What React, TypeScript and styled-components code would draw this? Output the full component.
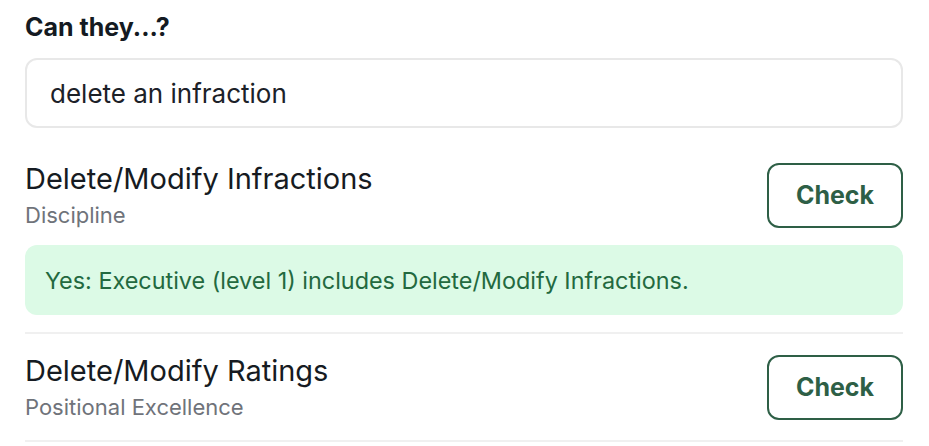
import React from "react";
import styled, { createGlobalStyle } from "styled-components";

const GlobalStyle = createGlobalStyle`
  html, body { margin: 0; padding: 0; background: #ffffff; }
  body { font-family: Inter, "Noto Sans", sans-serif; -webkit-font-smoothing: antialiased; }
  * { box-sizing: border-box; }
`;

const Page = styled.div`
  padding: 10px 26px 0 25px;
  display: flex;
  flex-direction: column;
`;

const Heading = styled.h2`
  margin: 0;
  font-size: 25px;
  line-height: 34px;
  font-weight: 700;
  color: #141a22;
`;

const Query = styled.input`
  margin-top: 14px;
  height: 70px;
  width: 100%;
  border: 2px solid #e8e8e8;
  border-radius: 12px;
  padding: 0 23px;
  font-family: inherit;
  font-size: 26px;
  color: #1c2128;
  outline: none;
  background: #fff;
`;

const List = styled.div`
  margin-top: 14px;
  display: flex;
  flex-direction: column;
`;

const Item = styled.div`
  padding: 17px 0 17px;
  border-bottom: 2px solid #f0f0f0;
`;

const ItemHeader = styled.div`
  display: flex;
  align-items: center;
  justify-content: space-between;
`;

const ItemText = styled.div`
  display: flex;
  flex-direction: column;
`;

const ItemTitle = styled.div`
  font-size: 29px;
  line-height: 40px;
  color: #161b22;
`;

const ItemCategory = styled.div`
  font-size: 22px;
  line-height: 32px;
  color: #6f737a;
`;

const CheckButton = styled.button`
  width: 136px;
  height: 65px;
  border: 2px solid #2e5f46;
  border-radius: 12px;
  background: #fff;
  color: #2e5f46;
  font-family: inherit;
  font-size: 25px;
  font-weight: 700;
  cursor: pointer;
`;

const Result = styled.div`
  margin-top: 14px;
  background: #dcfae6;
  border-radius: 12px;
  height: 70px;
  display: flex;
  align-items: center;
  padding: 0 20px;
  font-size: 23.4px;
  color: #23693f;
`;

const items = [
  {
    title: "Delete/Modify Infractions",
    category: "Discipline",
    result: "Yes: Executive (level 1) includes Delete/Modify Infractions.",
  },
  { title: "Delete/Modify Ratings", category: "Positional Excellence" },
];

export default function App() {
  return (
    <>
      <GlobalStyle />
      <Page>
        <Heading>Can they...?</Heading>
        <Query defaultValue="delete an infraction" />
        <List>
          {items.map((it) => (
            <Item key={it.title}>
              <ItemHeader>
                <ItemText>
                  <ItemTitle>{it.title}</ItemTitle>
                  <ItemCategory>{it.category}</ItemCategory>
                </ItemText>
                <CheckButton>Check</CheckButton>
              </ItemHeader>
              {it.result && <Result>{it.result}</Result>}
            </Item>
          ))}
        </List>
      </Page>
    </>
  );
}
